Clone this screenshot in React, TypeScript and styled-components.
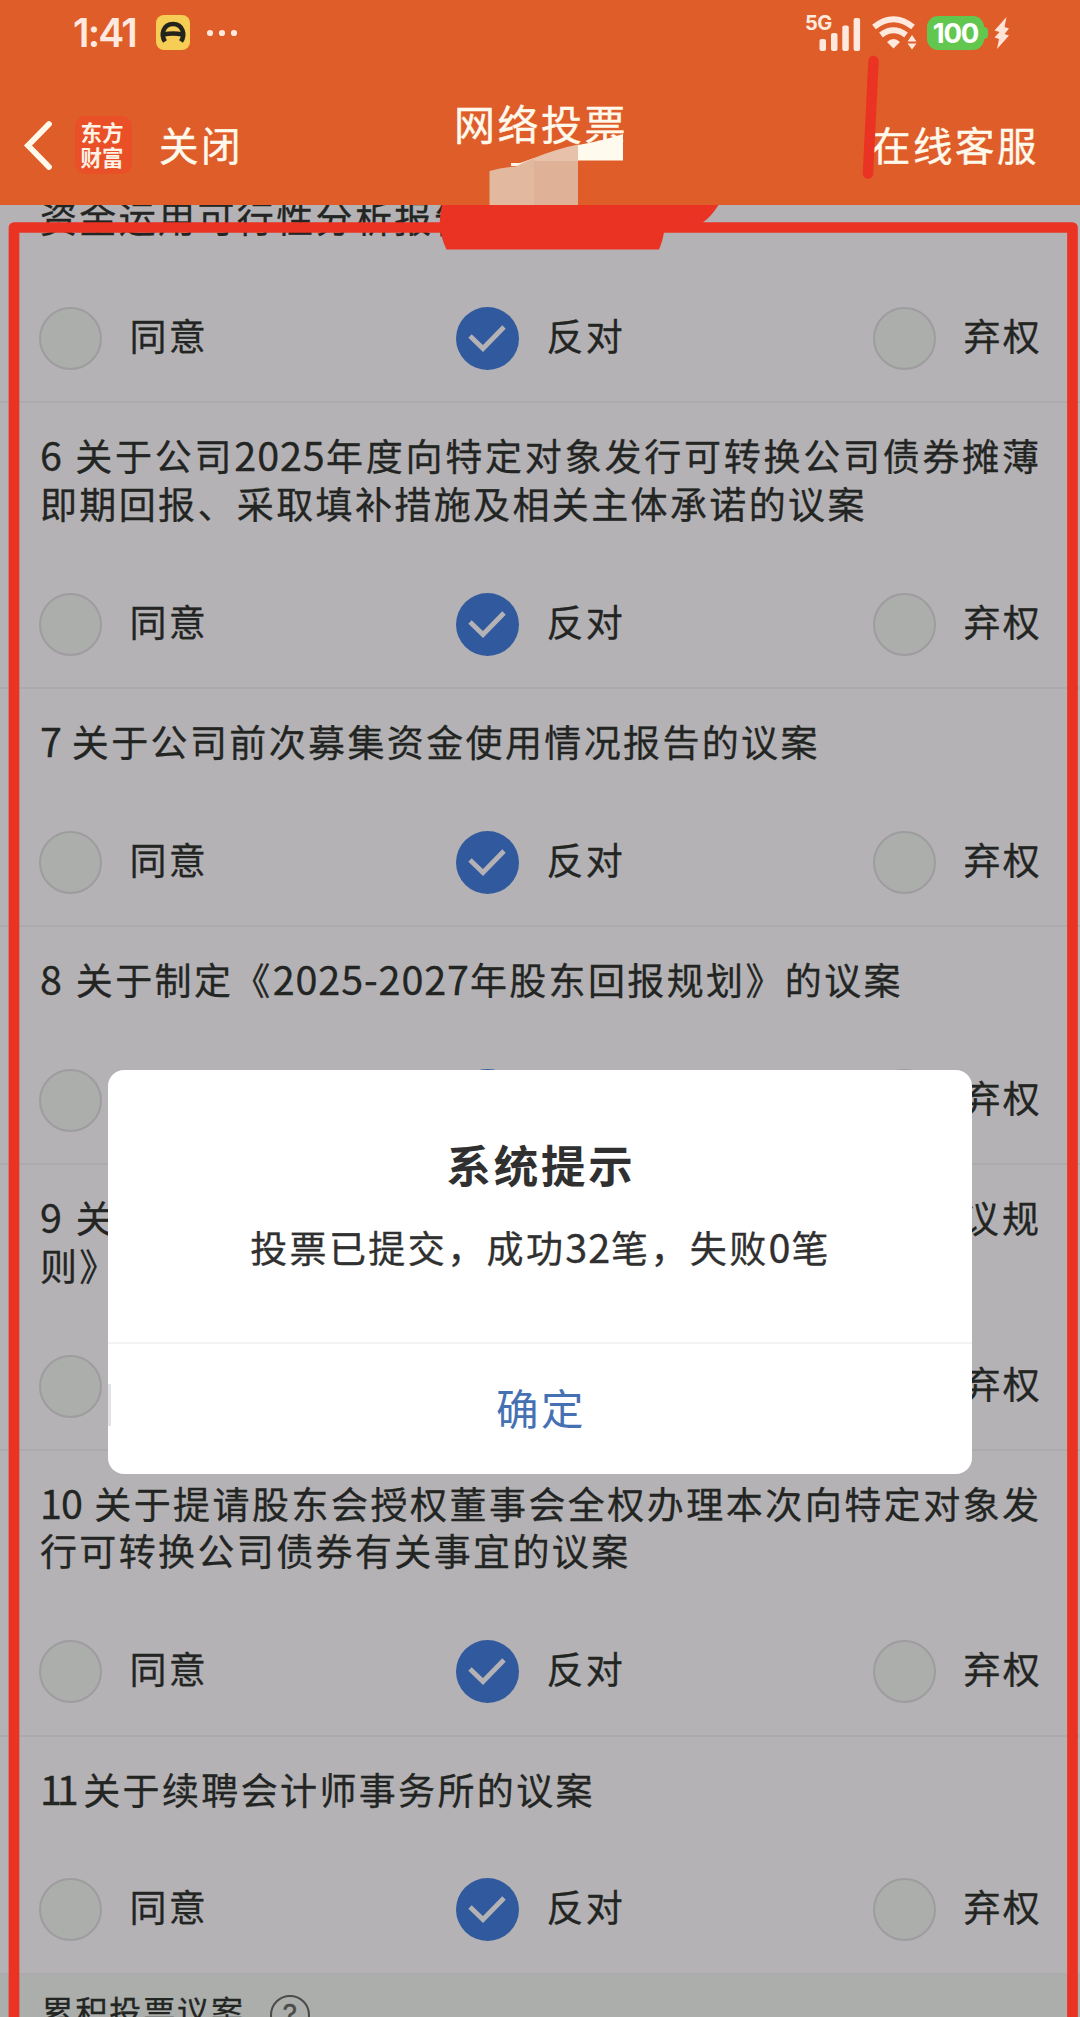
import React from "react";
import styled, { createGlobalStyle, css } from "styled-components";

const sans = '"Noto Sans CJK SC", "Noto Sans", sans-serif';

const GlobalStyle = createGlobalStyle`
  *, *::before, *::after { box-sizing: border-box; }
  body { margin: 0; background: #b4b2b5; font-family: ${sans}; }
`;

const Screen = styled.main`
  position: relative;
  display: flex;
  flex-direction: column;
  width: 1080px;
  height: 2017px;
  overflow: hidden;
  background: #b4b2b5;
  color: #232523;
`;

const Header = styled.header`
  display: flex;
  flex-direction: column;
  flex: none;
  height: 205px;
  background: #de5d29;
  color: #fff9ec;
`;

const StatusBar = styled.div`
  display: flex;
  align-items: center;
  justify-content: space-between;
  height: 65px;
  padding: 0 71px 0 73px;
`;

const StatusGroup = styled.div<{ $gap: number }>`
  display: flex;
  align-items: center;
  gap: ${(p) => p.$gap}px;
`;

const Clock = styled.span`
  width: 66px;
  font: 600 39px/48px Inter, sans-serif;
  letter-spacing: -1.8px;
  color: #ffe9df;
  white-space: nowrap;
`;

const Battery = styled.span`
  position: relative;
  display: flex;
  align-items: center;
  justify-content: center;
  width: 57px;
  height: 34px;
  border-radius: 11px;
  background: #62c74f;
  color: #fff;
  font: 700 27.5px/34px Inter, sans-serif;
  letter-spacing: -1.2px;
  &::after {
    content: "";
    position: absolute;
    right: -4px;
    top: 11px;
    width: 5px;
    height: 12px;
    border-radius: 0 4px 4px 0;
    background: #62c74f;
  }
`;

const NavBar = styled.nav`
  display: grid;
  grid-template-columns: 1fr auto 1fr;
  height: 140px;
  padding: 0 20px 0 22px;
`;

const NavStart = styled.div`
  display: flex;
  align-items: center;
  height: 160px;
`;

const Logo = styled.span`
  display: flex;
  flex-direction: column;
  align-items: center;
  justify-content: center;
  width: 57px;
  height: 58px;
  margin: 0 27px 0 22px;
  padding: 0 3px 2px 0;
  border-radius: 10px;
  background: #ea5027;
  color: #fff3e6;
  font-size: 21.5px;
  font-weight: 700;
  line-height: 25.5px;
`;

const NavText = styled.span<{ $title?: boolean }>`
  font-size: ${(p) => (p.$title ? 41 : 39.5)}px;
  letter-spacing: 2.5px;
  line-height: 50px;
  white-space: nowrap;
  -webkit-text-stroke: 0.4px currentColor;
  ${(p) =>
    p.$title
      ? css`
          margin-top: 32px;
        `
      : css`
          margin-top: -3px;
        `}
`;

const NavEnd = styled(NavStart)`
  justify-content: flex-end;
  padding-right: 21px;
`;

const List = styled.section`
  flex: 1;
  min-height: 0;
  overflow: hidden;
  -webkit-text-stroke: 0.3px currentColor;
`;

const Item = styled.article<{ $clipped?: boolean }>`
  display: flex;
  flex-direction: column;
  padding: 29px 38.5px 0 40px;
  margin-top: ${(p) => (p.$clipped ? -39.8 : 0)}px;
  border-bottom: 2px solid #abaaac;
`;

const Title = styled.h2`
  margin: 0;
  font-size: 37px;
  font-weight: 400;
  letter-spacing: 2.37px;
  line-height: 47.4px;
`;

const Line = styled.span<{ $justified: boolean }>`
  display: block;
  height: 47.4px;
  white-space: ${(p) => (p.$justified ? "normal" : "nowrap")};
  text-align: justify;
  text-align-last: ${(p) => (p.$justified ? "justify" : "left")};
`;

const Digits = styled.span<{ $tight?: number }>`
  font-size: 39.5px;
  line-height: 0;
  letter-spacing: ${(p) => 0.9 - (p.$tight ?? 0)}px;
`;

const Num = styled(Digits)<{ $after: number }>`
  margin-right: ${(p) => p.$after}px;
`;

const Options = styled.div`
  display: grid;
  grid-template-columns: 417px 417px auto;
  align-items: center;
  height: 159.8px;
  margin: 0 -10px 0 -1px;
  padding-top: 34px;
`;

const Option = styled.label`
  display: flex;
  align-items: center;
  gap: 27.5px;
  white-space: nowrap;
`;

const OptionText = styled.span`
  margin-top: -7px;
  font-size: 37px;
  letter-spacing: 2.3px;
  line-height: 48px;
`;

const Radio = styled.span<{ $checked?: boolean }>`
  display: flex;
  align-items: center;
  justify-content: center;
  width: 63px;
  height: 63px;
  border-radius: 50%;
  border: ${(p) => (p.$checked ? "none" : "2px solid #9f9ca0")};
  background: ${(p) => (p.$checked ? "#315a9e" : "#abaeab")};
`;

const SectionBar = styled.div`
  display: flex;
  align-items: flex-start;
  gap: 25px;
  height: 80px;
  padding: 11px 41.5px;
  background: #abaeab;
  font-size: 32px;
  letter-spacing: 1.9px;
  line-height: 48px;
`;

const Help = styled.span`
  display: flex;
  align-items: center;
  justify-content: center;
  width: 40px;
  height: 40px;
  margin-top: 9px;
  border: 2px solid #4a4b4a;
  border-radius: 50%;
  color: #4a4b4a;
  font: 400 29px/36px Inter, sans-serif;
  letter-spacing: 0;
`;

const Markup = styled.svg`
  position: absolute;
  inset: 0;
  pointer-events: none;
`;

const Dialog = styled.div`
  position: absolute;
  left: 108px;
  top: 1069.5px;
  display: flex;
  flex-direction: column;
  width: 864px;
  height: 404px;
  border-radius: 16px;
  background: #fff;
  color: #303030;
  text-align: center;
  overflow: hidden;
`;

const DialogBody = styled.div`
  height: 274px;
  padding-top: 61px;
  border-bottom: 2px solid #f3f3f3;
`;

const DialogTitle = styled.h1`
  margin: 0;
  padding-left: 2px;
  font-size: 44.5px;
  font-weight: 700;
  letter-spacing: 2.8px;
  line-height: 66px;
`;

const DialogText = styled.p`
  margin: 22px 0 0;
  padding-left: 1px;
  font-size: 37px;
  letter-spacing: 2.4px;
  line-height: 56px;
  -webkit-text-stroke: 0.3px currentColor;
`;

const Confirm = styled.button`
  position: relative;
  flex: 1;
  padding: 0 0 3px 2px;
  border: 0;
  background: none;
  color: #4571b3;
  font: 400 42.5px/60px ${sans};
  letter-spacing: 2.5px;
  &::before {
    content: "";
    position: absolute;
    left: 0;
    top: 40px;
    width: 3px;
    height: 42px;
    background: #e4e3e5;
  }
`;

type Vote = { num?: string; tight?: number; after?: number; lines: string[]; clipped?: boolean };

const votes: Vote[] = [
  { lines: ["资金运用可行性分析报告"], clipped: true },
  { num: "6", after: 12, lines: ["关于公司2025年度向特定对象发行可转换公司债券摊薄", "即期回报、采取填补措施及相关主体承诺的议案"] },
  { num: "7", after: 9, lines: ["关于公司前次募集资金使用情况报告的议案"] },
  { num: "8", after: 13, lines: ["关于制定《2025-2027年股东回报规划》的议案"] },
  { num: "9", after: 12, lines: ["关于公司制定的《可转换公司债券之债券持有人会议规", "则》的议案"] },
  { num: "10", tight: 1.8, after: 12, lines: ["关于提请股东会授权董事会全权办理本次向特定对象发", "行可转换公司债券有关事宜的议案"] },
  { num: "11", tight: 6, after: 9.5, lines: ["关于续聘会计师事务所的议案"] },
];

const choices = ["同意", "反对", "弃权"];

const withDigits = (text: string) =>
  text.split(/([\d-]+)/).map((part, i) => (i % 2 ? <Digits key={i}>{part}</Digits> : part));

const VoteItem = ({ num, tight, after = 0, lines, clipped }: Vote) => (
  <Item $clipped={clipped}>
    <Title>
      {lines.map((line, i) => (
        <Line key={line} $justified={i < lines.length - 1}>
          {i === 0 && num && (
            <Num $tight={tight} $after={after}>
              {num}
            </Num>
          )}
          {withDigits(line)}
        </Line>
      ))}
    </Title>
    <Options>
      {choices.map((choice) => {
        const checked = choice === "反对";
        return (
          <Option key={choice}>
            <Radio $checked={checked}>
              {checked && (
                <svg width="63" height="63" viewBox="0 0 63 63" fill="none">
                  <path d="M14 29 L27 41.5 L48 20" stroke="#b4b2b5" strokeWidth="4.8" />
                </svg>
              )}
            </Radio>
            <OptionText>{choice}</OptionText>
          </Option>
        );
      })}
    </Options>
  </Item>
);

const AppBadge = () => (
  <svg width="34" height="35" viewBox="0 0 34 35" fill="none">
    <rect width="34" height="35" rx="8" fill="#f6cd55" />
    <path d="M9 26.500 C4.500 20 7 9 17 9 C27 9 29.500 20 25 26.500" stroke="#23251c" strokeWidth="4.600" />
    <path d="M7.500 19.500 Q17 17.500 26.500 19.500" stroke="#23251c" strokeWidth="4.400" />
  </svg>
);

const Dots = () => (
  <svg width="32" height="8" viewBox="0 0 32 8" fill="#ffe9df">
    <circle cx="3" cy="4" r="3.1" />
    <circle cx="15" cy="4" r="3.1" />
    <circle cx="27" cy="4" r="3.1" />
  </svg>
);

const Signal = () => (
  <svg width="56" height="38" viewBox="805 12 56 38" fill="#ffe9df">
    <text x="805" y="28" fontFamily="Inter, sans-serif" fontWeight="700" fontSize="20" letterSpacing="-0.5">
      5G
    </text>
    <rect x="819.5" y="37" width="6.5" height="12" rx="2" />
    <rect x="831" y="31" width="6.5" height="18" rx="2" />
    <rect x="842.3" y="23.5" width="6.5" height="25.5" rx="2" />
    <rect x="853.6" y="16" width="6.5" height="33" rx="2" />
  </svg>
);

const Wifi = () => (
  <svg width="46" height="34" viewBox="871 16 46 34" fill="none" stroke="#ffe9df">
    <path d="M874 27 Q893.500 11.500 913 27" strokeWidth="6" />
    <path d="M881 35 Q893.500 25.500 906 35" strokeWidth="6" />
    <path d="M887 42 Q893.500 36 900 42 L893.500 48.500 Z" fill="#ffe9df" stroke="none" />
    <path d="M907.500 41.500 L912 35 L916.500 41.500 Z M907.500 43.500 L912 49.500 L916.500 43.500 Z" fill="#ffe9df" stroke="none" />
  </svg>
);

const Bolt = () => (
  <svg width="15" height="34" viewBox="0 0 15 34" fill="#ffe3d8">
    <path d="M12.500 1 L0.500 14.500 L5.500 16 L0.500 21.500 L5 23 L3 33 L15 19.500 L10.500 18 L15 12.500 L10.500 11 Z" />
  </svg>
);

export default function App() {
  return (
    <>
      <GlobalStyle />
      <Screen>
        <Header>
          <StatusBar>
            <StatusGroup $gap={17}>
              <Clock>1:41</Clock>
              <AppBadge />
              <Dots />
            </StatusGroup>
            <StatusGroup $gap={10}>
              <Signal />
              <Wifi />
              <Battery>100</Battery>
              <Bolt />
            </StatusGroup>
          </StatusBar>
          <NavBar>
            <NavStart>
              <svg width="31" height="50" viewBox="0 0 31 50" fill="none">
                <path d="M27 4 L6 25.500 L27 47" stroke="#fff9ec" strokeWidth="5.800" strokeLinecap="round" />
              </svg>
              <Logo>
                <span>东方</span>
                <span>财富</span>
              </Logo>
              <NavText>关闭</NavText>
            </NavStart>
            <NavText $title>网络投票</NavText>
            <NavEnd>
              <NavText>在线客服</NavText>
            </NavEnd>
          </NavBar>
        </Header>
        <List>
          {votes.map((vote) => (
            <VoteItem key={vote.lines[0]} {...vote} />
          ))}
          <SectionBar>
            累积投票议案
            <Help>?</Help>
          </SectionBar>
        </List>
        <Markup width="1080" height="2017" viewBox="0 0 1080 2017">
          <path d="M511 163 H520 L534 158 V166 H511 Z" fill="#fff3e6" />
          <path d="M578 145 Q602 141 623 134 V160.500 H578 Z" fill="#fffaee" />
          <path d="M489.500 171 Q503 167.500 516 166.500 Q526 161 534 158 V205 H489.500 Z" fill="#e2b89e" />
          <path d="M534 158 Q556 149 578 144.500 V161 H534 Z" fill="#e7c1aa" />
          <path d="M534 161 H578 V205 H534 Z" fill="#dfb197" />
          <path d="M14 2030 V227.500 H1072.500 V2030" fill="none" stroke="#ea3323" strokeWidth="10.700" strokeLinejoin="round" />
          <path d="M442 205 H718.500 Q711 217 702 223 L664 232 Q663 240 659 249.500 H446.500 Q436 228 442 205 Z" fill="#ea3323" />
          <path d="M873.500 61 L868 173.500" stroke="#ea3323" strokeWidth="10.500" strokeLinecap="round" />
        </Markup>
        <Dialog role="dialog">
          <DialogBody>
            <DialogTitle>系统提示</DialogTitle>
            <DialogText>{withDigits("投票已提交，成功32笔，失败0笔")}</DialogText>
          </DialogBody>
          <Confirm>确定</Confirm>
        </Dialog>
      </Screen>
    </>
  );
}
